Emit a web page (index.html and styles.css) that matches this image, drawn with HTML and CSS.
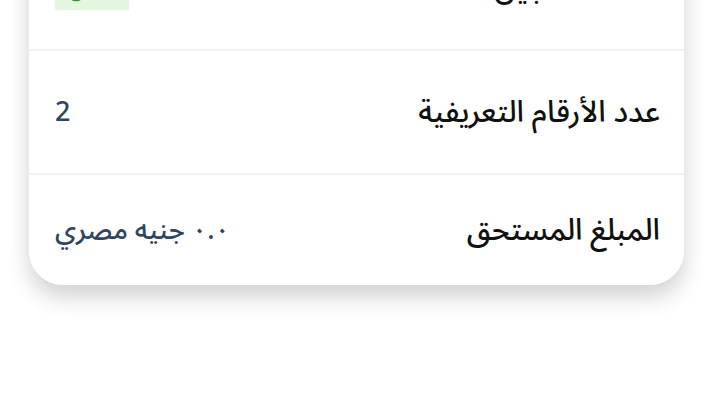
FILE: index.html
```html
<!DOCTYPE html>
<html lang="ar" dir="rtl">
<head>
<meta charset="utf-8">
<link rel="stylesheet" href="styles.css">
</head>
<body>
<div class="page">
  <div class="card">
    <div class="row row-first">
      <div class="label">حالة التسجيل</div>
      <div class="badge">مدفوع</div>
    </div>
    <div class="row">
      <div class="label">عدد الأرقام التعريفية</div>
      <div class="value">2</div>
    </div>
    <div class="row row-last">
      <div class="label">المبلغ المستحق</div>
      <div class="value">٠.٠ جنيه مصري</div>
    </div>
  </div>
</div>
</body>
</html>
```
FILE: styles.css
```css
html, body {
  margin: 0;
  padding: 0;
  background: #ffffff;
}
body {
  font-family: "Noto Sans Arabic", "Noto Sans", "DejaVu Sans", sans-serif;
  overflow: hidden;
  min-height: 410px;
}
.page {
  padding: 0 29px 40px;
}
.card {
  margin-top: -73px;
  background: #ffffff;
  border-radius: 0 0 34px 34px;
  box-shadow: 0 12px 22px rgba(0, 0, 0, 0.18);
}
.row {
  height: 122px;
  display: flex;
  align-items: center;
  justify-content: space-between;
  padding: 0 24px 0 26px;
  border-bottom: 2px solid #f1f1f1;
}
.row-last {
  height: 110px;
  border-bottom: none;
}
.label {
  font-size: 30px;
  font-weight: 500;
  color: #111111;
}
.value {
  font-size: 27px;
  font-weight: 500;
  color: #2f4462;
}
.badge {
  background: #e4f6de;
  color: #3c8d2f;
  font-size: 18px;
  width: 74px;
  height: 44px;
  display: flex;
  align-items: center;
  justify-content: center;
}
```
